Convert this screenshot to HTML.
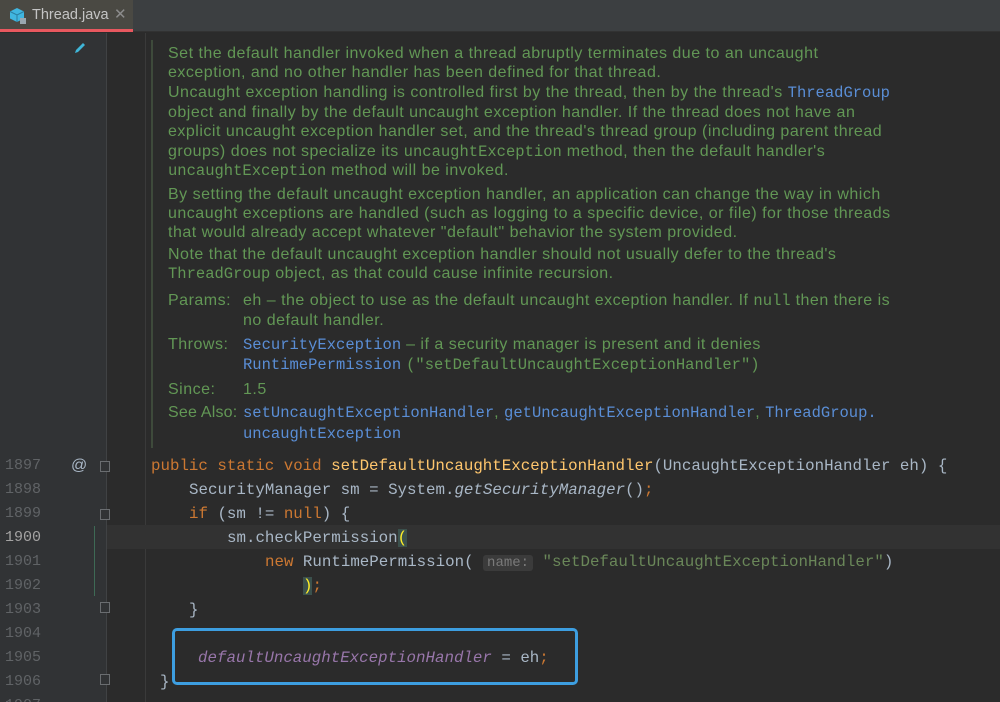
<!DOCTYPE html>
<html><head><meta charset="utf-8"><style>
*{margin:0;padding:0;box-sizing:border-box}
html,body{width:1000px;height:702px;overflow:hidden}
body{background:#2b2b2b;position:relative;font-family:"Liberation Sans",sans-serif}
.bar{position:absolute;left:0;top:0;width:1000px;height:32px;background:#3c3f41;border-bottom:1px solid #323232}
.tab{position:absolute;left:0;top:0;width:133px;height:32px;background:#4a4943}
.tab .u{position:absolute;left:0;bottom:0;width:133px;height:3px;background:#e8585f}
.tab .t{position:absolute;left:32px;top:7px;color:#c4c4c4;font-size:14.5px}
.tab .x{position:absolute;left:114px;top:5px;color:#8c8c8c;font-size:15px}
.gut{position:absolute;left:0;top:33px;width:106px;height:669px;background:#313335}
.gl{position:absolute;left:106px;top:33px;width:1px;height:669px;background:#404244}
.vl{position:absolute;left:145px;top:33px;width:1px;height:669px;background:#3a3a3a}
.gb{position:absolute;left:151px;top:40px;width:2px;height:408px;background:#3e4a3b}
.d{position:absolute;left:168px;white-space:nowrap;color:#629755;font-size:16px;letter-spacing:0.5px}
.d2{left:243px}
.m{font-family:"Liberation Mono",monospace;font-size:15.5px;letter-spacing:0}
.l{color:#5a8ed6}
.hl{position:absolute;left:107px;top:525px;width:893px;height:24px;background:#323232}
.ln{position:absolute;left:5px;width:40px;color:#606366;font-family:"Liberation Mono",monospace;font-size:15px;line-height:24px}
.c{position:absolute;white-space:nowrap;font-family:"Liberation Mono",monospace;font-size:15.8px;line-height:24px;color:#a9b7c6}
.k{color:#cc7832}.f{color:#ffc66d}.s{color:#6a8759}.i{font-style:italic}.p{color:#9876aa;font-style:italic}
.hint{background:#3b3b3b;color:#7a7a7a;font-size:14px;padding:0 4px;border-radius:3px}
.br{color:#ffef28;background:#3b514d}
.box{position:absolute;left:172px;top:628px;width:406px;height:57px;border:3px solid #3d9ee0;border-radius:5px}
.fold{position:absolute;left:100px;width:10px;height:11px;border:1px solid #6a6d70;background:#313335}
</style></head><body>
<div class="bar"><div class="tab">
<svg style="position:absolute;left:9px;top:7px" width="18" height="18" viewBox="0 0 18 18"><path d="M8 1l7 3.5v7L8 15 1 11.5v-7z" fill="#40b6e0"/><path d="M1 4.5L8 8l7-3.5M8 8v7" stroke="#2a7ea0" stroke-width="1" fill="none"/><rect x="11" y="11" width="6" height="6" fill="#9aa7b0"/></svg>
<div class="t">Thread.java</div><div class="x">✕</div><div class="u"></div></div></div>
<div class="gut"></div><div class="gl"></div><div class="vl"></div><div class="gb"></div>
<svg style="position:absolute;left:72px;top:40px" width="16" height="16" viewBox="0 0 16 16"><path d="M3 13l1-3 7-7 2 2-7 7z" fill="#3fb6d8"/></svg>

<div class="d" style="top:45px">Set the default handler invoked when a thread abruptly terminates due to an uncaught</div>
<div class="d" style="top:64px">exception, and no other handler has been defined for that thread.</div>
<div class="d" style="top:84px">Uncaught exception handling is controlled first by the thread, then by the thread's <span class="m l">ThreadGroup</span></div>
<div class="d" style="top:104px">object and finally by the default uncaught exception handler. If the thread does not have an</div>
<div class="d" style="top:123px">explicit uncaught exception handler set, and the thread's thread group (including parent thread</div>
<div class="d" style="top:143px">groups) does not specialize its <span class="m">uncaughtException</span> method, then the default handler's</div>
<div class="d" style="top:162px"><span class="m">uncaughtException</span> method will be invoked.</div>
<div class="d" style="top:186px">By setting the default uncaught exception handler, an application can change the way in which</div>
<div class="d" style="top:205px">uncaught exceptions are handled (such as logging to a specific device, or file) for those threads</div>
<div class="d" style="top:224px">that would already accept whatever "default" behavior the system provided.</div>
<div class="d" style="top:246px">Note that the default uncaught exception handler should not usually defer to the thread's</div>
<div class="d" style="top:265px"><span class="m">ThreadGroup</span> object, as that could cause infinite recursion.</div>
<div class="d" style="top:292px">Params:</div><div class="d d2" style="top:292px">eh – the object to use as the default uncaught exception handler. If <span class="m">null</span> then there is</div>
<div class="d d2" style="top:312px">no default handler.</div>
<div class="d" style="top:336px">Throws:</div><div class="d d2" style="top:336px"><span class="m l">SecurityException</span> – if a security manager is present and it denies</div>
<div class="d d2" style="top:356px"><span class="m l">RuntimePermission</span> <span class="m">("setDefaultUncaughtExceptionHandler")</span></div>
<div class="d" style="top:381px">Since:</div><div class="d d2" style="top:381px">1.5</div>
<div class="d" style="top:404px;letter-spacing:0.2px">See Also:</div><div class="d d2" style="top:404px"><span class="m l">setUncaughtExceptionHandler</span>, <span class="m l">getUncaughtExceptionHandler</span>, <span class="m l">ThreadGroup.</span></div>
<div class="d d2" style="top:425px"><span class="m l">uncaughtException</span></div>

<div class="hl"></div>
<div class="ln" style="top:454px">1897</div><div class="ln" style="top:478px">1898</div><div class="ln" style="top:502px">1899</div><div class="ln" style="top:526px;color:#a4a3a3">1900</div><div class="ln" style="top:550px">1901</div><div class="ln" style="top:574px">1902</div><div class="ln" style="top:598px">1903</div><div class="ln" style="top:622px">1904</div><div class="ln" style="top:646px">1905</div><div class="ln" style="top:670px">1906</div><div class="ln" style="top:694px;height:8px;overflow:hidden">1907</div>
<div style="position:absolute;left:71px;top:454px;color:#a9b7c6;font-size:16px;line-height:24px">@</div>
<div class="fold" style="top:461px"></div><div class="fold" style="top:509px"></div><div class="fold" style="top:602px"></div><div class="fold" style="top:674px"></div>
<div style="position:absolute;left:94px;top:526px;width:1px;height:70px;background:#3e6a55"></div>

<div class="c" style="left:151px;top:454px"><span class="k">public static void </span><span class="f">setDefaultUncaughtExceptionHandler</span>(UncaughtExceptionHandler eh) {</div>
<div class="c" style="left:189px;top:478px">SecurityManager sm = System.<span class="i">getSecurityManager</span>()<span class="k">;</span></div>
<div class="c" style="left:189px;top:502px"><span class="k">if </span>(sm != <span class="k">null</span>) {</div>
<div class="c" style="left:227px;top:526px">sm.checkPermission<span class="br">(</span></div>
<div class="c" style="left:265px;top:550px"><span class="k">new </span>RuntimePermission( <span class="hint">name:</span> <span class="s">"setDefaultUncaughtExceptionHandler"</span>)</div>
<div class="c" style="left:303px;top:574px"><span class="br">)</span><span class="k">;</span></div>
<div class="c" style="left:189px;top:598px">}</div>
<div class="c" style="left:198px;top:646px"><span class="p">defaultUncaughtExceptionHandler</span> = eh<span class="k">;</span></div>
<div class="c" style="left:160px;top:670px">}</div>
<div class="box"></div>
</body></html>
